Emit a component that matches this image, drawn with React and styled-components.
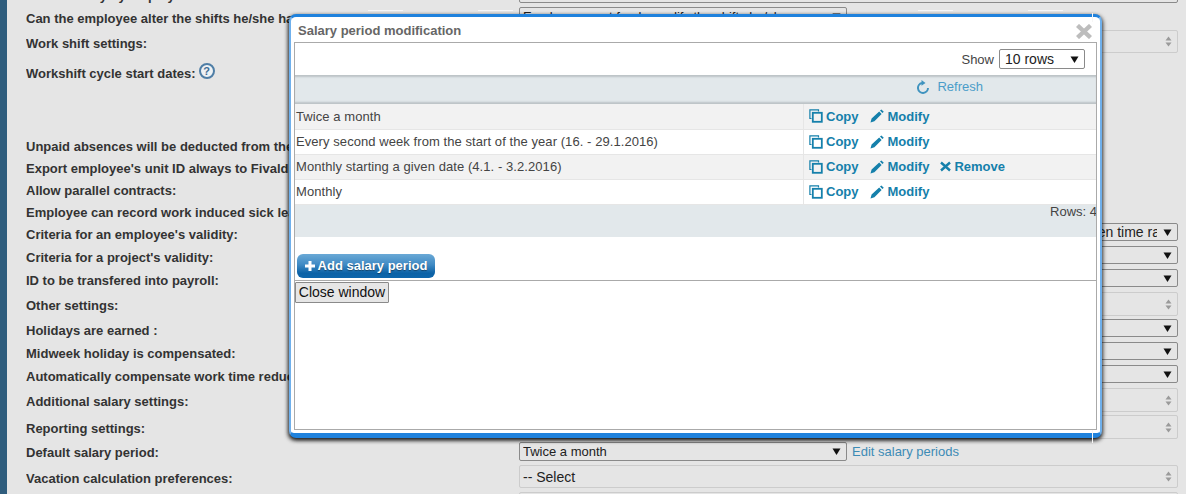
import React from 'react';
import styled, { createGlobalStyle, css } from 'styled-components';

const GlobalStyle = createGlobalStyle`
  html, body {
    margin: 0;
    padding: 0;
    height: 494px;
    overflow: hidden;
    background: #e5e5e5;
  }
  body {
    font-family: "Liberation Sans", Arial, sans-serif;
    font-size: 13px;
    color: #333;
  }
`;

const Page = styled.div`
  position: relative;
  display: flex;
  width: 1186px;
  height: 494px;
  overflow: hidden;
  background: #e5e5e5;
`;

const Sidebar = styled.div`
  flex: 0 0 7px;
  background: #2f5d7d;
`;

const Form = styled.div`
  flex: 1;
  display: flex;
  flex-direction: column;
  padding-left: 19px;
  margin-top: -15px;
`;

const Row = styled.div`
  flex: 0 0 ${(p) => p.$h}px;
  min-height: 0;
  margin-top: ${(p) => p.$gap || 0}px;
  display: flex;
  align-items: center;
`;

const Label = styled.div`
  flex: 0 0 493px;
  padding-top: ${(p) => (p.$drop === undefined ? 3 : p.$drop)}px;
  display: flex;
  align-items: center;
  font-size: 13px;
  font-weight: 700;
  color: #333;
  white-space: nowrap;
  overflow: hidden;
`;

const HelpBadge = styled.span`
  width: 12px;
  height: 12px;
  margin: -6px 0 0 3px;
  border: 2px solid #4f7ea6;
  border-radius: 50%;
  background: #eef2f5;
  color: #3f6d96;
  font-size: 11px;
  line-height: 12px;
  text-align: center;
`;

const Select = styled.div`
  box-sizing: border-box;
  display: flex;
  align-items: center;
  height: 100%;
  width: ${(p) => (p.$narrow ? '328px' : '659px')};
  padding: 0 5px 0 3px;
  border: 1px solid ${(p) => (p.$muted ? '#cccccc' : '#8a8a8a')};
  border-radius: 2px;
  font-size: 14px;
  color: #222;
`;

const SelectText = styled.span`
  flex: 1;
  overflow: hidden;
  white-space: nowrap;
  font-size: ${(p) => (p.$small ? 13 : 14)}px;
  ${(p) => p.$end && css`
    display: flex;
    justify-content: flex-end;
    margin-right: 6px;
  `}
`;

const ClippedEnd = styled.span`
  margin-right: -3px;
`;

const EditLink = styled.a`
  margin-left: 5px;
  font-size: 13px;
  color: #3d8bb5;
`;

const Modal = styled.div`
  position: absolute;
  left: 289px;
  top: 14px;
  box-sizing: border-box;
  width: 813px;
  height: 424px;
  display: flex;
  flex-direction: column;
  background: #fff;
  border-style: solid;
  border-color: #1f82dd #6fb0ec #1f82dd #6fb0ec;
  border-width: 3px 2px 5px 2px;
  border-radius: 7px;
  box-shadow: -1px 2px 4px rgba(0, 0, 0, 0.75), 1px 2px 4px rgba(0, 0, 0, 0.6);
`;

const ModalHead = styled.div`
  flex: 0 0 25px;
  box-sizing: border-box;
  position: relative;
  display: flex;
  align-items: center;
  padding: 2px 0 0 7px;
  font-size: 13px;
  font-weight: 700;
  color: #666;
`;

const CloseX = styled.svg`
  position: absolute;
  right: 8px;
  top: 7px;
`;

const ModalBody = styled.div`
  flex: 1;
  margin: 0 3px 3px;
  display: flex;
  flex-direction: column;
  border: 1px solid #aaa;
  overflow: hidden;
`;

const ShowBar = styled.div`
  flex: 0 0 32px;
  display: flex;
  align-items: center;
  justify-content: flex-end;
  padding-right: 11px;
  font-size: 13px;
  color: #444;
`;

const RowsSelect = styled.div`
  box-sizing: border-box;
  width: 86px;
  height: 20px;
  margin-left: 5px;
  padding: 0 5px;
  display: flex;
  align-items: center;
  justify-content: space-between;
  border: 1px solid #8a8a8a;
  border-radius: 2px;
  font-size: 14px;
  color: #222;
`;

const RefreshBar = styled.div`
  box-sizing: border-box;
  flex: 0 0 29px;
  display: flex;
  align-items: center;
  justify-content: flex-end;
  gap: 8px;
  padding: 0 113px 6px 0;
  background: #e2e8eb;
  box-shadow: inset 0 3px 2px -1px #bcc3c7, inset 0 -3px 2px -1px #bcc3c7;
  font-size: 13px;
  color: #4b9dc9;
`;

const Table = styled.table`
  width: 100%;
  border-collapse: collapse;
  table-layout: fixed;
  font-size: 13px;
`;

const Tr = styled.tr`
  height: 25px;
  background: ${(p) => (p.$odd ? '#f2f2f2' : '#fff')};
  border-bottom: 1px solid #e6e6e6;
`;

const NameCell = styled.td`
  width: 507px;
  padding: 0 0 0 1px;
  color: #444;
  letter-spacing: 0.07px;
  white-space: nowrap;
  border-right: 1px solid #e6e6e6;
`;

const ActionCell = styled.td`
  padding: 0 0 0 5px;
`;

const Actions = styled.div`
  display: flex;
  align-items: center;
  gap: 11px;
`;

const Action = styled.a`
  display: flex;
  align-items: center;
  gap: ${(p) => p.$gap}px;
  font-weight: 700;
  color: #1580ab;
  white-space: nowrap;
`;

const RowsBar = styled.div`
  flex: 0 0 32px;
  margin-right: -1px;
  line-height: 13px;
  text-align: right;
  background: #e2e8eb;
  font-size: 13px;
  color: #444;
`;

const AddRow = styled.div`
  flex: 0 0 44px;
  box-sizing: border-box;
  display: flex;
  align-items: flex-end;
  padding: 0 0 2px 2px;
  border-bottom: 1px solid #aaa;
`;

const AddButton = styled.a`
  box-sizing: border-box;
  width: 138px;
  height: 24px;
  display: flex;
  align-items: center;
  justify-content: center;
  gap: 3px;
  border-radius: 6px;
  background: linear-gradient(#6aa9d6 0%, #3f8ac4 45%, #0c62a6 80%, #0e66ab 100%);
  font-size: 13px;
  font-weight: 700;
  color: #fff;
  text-shadow: 0 1px 1px rgba(0, 0, 0, 0.4);
`;

const CloseButton = styled.button`
  box-sizing: border-box;
  align-self: flex-start;
  width: 94px;
  height: 21px;
  margin-top: 1px;
  padding: 0;
  border: 1px solid #8a8a8a;
  border-radius: 1px;
  background: #e6e6e6;
  font-family: inherit;
  font-size: 14px;
  color: #111;
`;

const Streak = styled.div`
  position: absolute;
  left: ${(p) => p.$x}px;
  top: ${(p) => p.$y}px;
  width: ${(p) => p.$w}px;
  height: ${(p) => p.$h}px;
  background: #f6f6f6;
`;

const Caret = () => (
  <svg width="9" height="9" viewBox="0 0 9 9"><path d="M0.5 1.5h8L4.5 8z" fill="#111" /></svg>
);

const UpDown = () => (
  <svg width="7" height="11" viewBox="0 0 7 11">
    <path d="M3.5 0.5L6.5 4.5H0.5zM3.5 10.5L0.5 6.5H6.5z" fill="#9a9a9a" />
  </svg>
);

const CopyIcon = () => (
  <svg width="14" height="14" viewBox="0 0 14 14" fill="none" stroke="#1580ab">
    <path d="M2.5 9.5H0.9V0.9H9.5V2.5" strokeWidth="1.2" />
    <rect x="3.8" y="3.8" width="9" height="9" strokeWidth="1.8" />
  </svg>
);

const PencilIcon = () => (
  <svg width="14" height="14" viewBox="0 0 14 14" fill="#1580ab">
    <path d="M0.5 13.5L1.6 9.5L9.2 2.4L11.6 4.9L4.4 12.3zM10 1.6L11.4 0.4L13.8 2.7L12.4 4.1z" />
  </svg>
);

const RemoveIcon = () => (
  <svg width="11" height="11" viewBox="0 0 11 11" stroke="#1580ab" strokeWidth="2.4">
    <path d="M1 1.5L10 9.5M10 1.5L1 9.5" />
  </svg>
);

const RefreshIcon = () => (
  <svg width="12" height="14" viewBox="0 0 12 14" fill="none">
    <path d="M11 8A5 5 0 1 1 5 3" stroke="#3f93bf" strokeWidth="2" />
    <path d="M4.5 0L8.5 2.9L4.5 5.8z" fill="#3f93bf" />
  </svg>
);

const PlusIcon = () => (
  <svg width="10" height="10" viewBox="0 0 10 10" stroke="#fff" strokeWidth="3">
    <path d="M5 0V10M0 5H10" />
  </svg>
);

// rows of the settings form behind the dialog: h / gap keep the uneven spacing
const formRows = [
  { label: 'Editable only by employee:', h: 18 },
  { label: 'Can the employee alter the shifts he/she has planned:', h: 18, gap: 4, drop: 5, narrow: true, value: 'Employee must freely modify the shifts he/she', small: true },
  { label: 'Work shift settings:', h: 23, gap: 5, muted: true },
  { label: 'Workshift cycle start dates:', h: 24, gap: 7, help: true, none: true },
  { label: 'Unpaid absences will be deducted from the salary:', h: 18, gap: 52, none: true },
  { label: "Export employee's unit ID always to Fivaldi:", h: 18, gap: 4, none: true },
  { label: 'Allow parallel contracts:', h: 18, gap: 4, none: true },
  { label: 'Employee can record work induced sick leave:', h: 18, gap: 4, none: true },
  { label: "Criteria for an employee's validity:", h: 18, gap: 3, drop: 5, value: 'between time ra', end: true },
  { label: "Criteria for a project's validity:", h: 18, gap: 5, drop: 5 },
  { label: 'ID to be transfered into payroll:', h: 18, gap: 5, drop: 5 },
  { label: 'Other settings:', h: 24, gap: 5, muted: true },
  { label: 'Holidays are earned :', h: 18, gap: 3, drop: 5 },
  { label: 'Midweek holiday is compensated:', h: 18, gap: 5, drop: 5 },
  { label: 'Automatically compensate work time reductions:', h: 18, gap: 5, drop: 5 },
  { label: 'Additional salary settings:', h: 24, gap: 5, muted: true },
  { label: 'Reporting settings:', h: 24, gap: 3, muted: true },
];

const periods = [
  { name: 'Twice a month' },
  { name: 'Every second week from the start of the year (16. - 29.1.2016)' },
  { name: 'Monthly starting a given date (4.1. - 3.2.2016)', removable: true },
  { name: 'Monthly' },
];

const streaks = [
  { x: 368, y: 10, w: 35, h: 1 },
  { x: 478, y: 10, w: 35, h: 1 },
  { x: 918, y: 10, w: 35, h: 1 },
  { x: 1028, y: 10, w: 35, h: 1 },
  { x: 1092, y: 13, w: 1, h: 9 },
  { x: 1092, y: 430, w: 1, h: 13 },
];

export default function App() {
  return (
    <Page>
      <GlobalStyle />
      <Sidebar />
      <Form>
        {formRows.map((r) => (
          <Row key={r.label} $h={r.h} $gap={r.gap}>
            <Label $drop={r.drop}>
              {r.label}
              {r.help && <HelpBadge>?</HelpBadge>}
            </Label>
            {!r.none && (
              <Select $muted={r.muted} $narrow={r.narrow}>
                <SelectText $small={r.small} $end={r.end}>
                  {r.end ? <ClippedEnd>{r.value}</ClippedEnd> : r.value}
                </SelectText>
                {r.muted ? <UpDown /> : <Caret />}
              </Select>
            )}
          </Row>
        ))}
        <Row $h={19} $gap={3}>
          <Label $drop={1}>Default salary period:</Label>
          <Select $narrow>
            <SelectText $small>Twice a month</SelectText>
            <Caret />
          </Select>
          <EditLink>Edit salary periods</EditLink>
        </Row>
        <Row $h={23} $gap={4}>
          <Label>Vacation calculation preferences:</Label>
          <Select $muted>
            <SelectText>-- Select</SelectText>
            <UpDown />
          </Select>
        </Row>
        <Row $h={20} $gap={4}>
          <Label />
          <Select $muted />
        </Row>
      </Form>

      <Modal>
        <ModalHead>
          Salary period modification
          <CloseX width="16" height="15" viewBox="0 0 16 15" stroke="#bdbdbd" strokeWidth="4.4">
            <path d="M1.5 1.5L14.5 13.5M14.5 1.5L1.5 13.5" />
          </CloseX>
        </ModalHead>
        <ModalBody>
          <ShowBar>
            Show
            <RowsSelect>
              10 rows
              <Caret />
            </RowsSelect>
          </ShowBar>
          <RefreshBar>
            <RefreshIcon />
            Refresh
          </RefreshBar>
          <Table>
            <tbody>
              {periods.map((p, i) => (
                <Tr key={p.name} $odd={i % 2 === 0}>
                  <NameCell>{p.name}</NameCell>
                  <ActionCell>
                    <Actions>
                      <Action $gap={3}><CopyIcon />Copy</Action>
                      <Action $gap={4}><PencilIcon />Modify</Action>
                      {p.removable && <Action $gap={3}><RemoveIcon />Remove</Action>}
                    </Actions>
                  </ActionCell>
                </Tr>
              ))}
            </tbody>
          </Table>
          <RowsBar>Rows: 4</RowsBar>
          <AddRow>
            <AddButton><PlusIcon />Add salary period</AddButton>
          </AddRow>
          <CloseButton>Close window</CloseButton>
        </ModalBody>
      </Modal>

      {streaks.map((s) => (
        <Streak key={`${s.x}-${s.y}`} $x={s.x} $y={s.y} $w={s.w} $h={s.h} />
      ))}
    </Page>
  );
}
